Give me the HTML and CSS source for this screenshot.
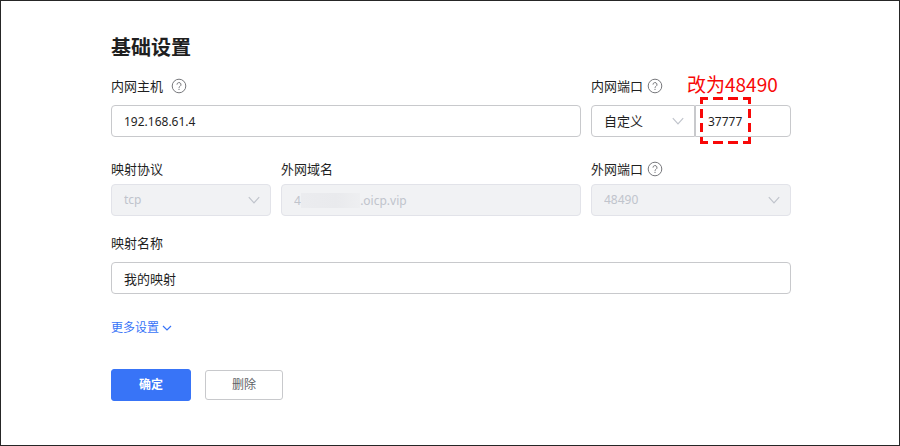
FILE: index.html
```html
<!DOCTYPE html>
<html lang="zh-CN">
	<head>
		<meta charset="utf-8">
		<meta name="viewport" content="width=device-width, initial-scale=1">
		<title>基础设置</title>
		<link rel="stylesheet" href="styles.css">
	</head>
	<body>
		<form class="settings">
			<h1>基础设置</h1>
			<div class="row">
				<div class="field host">
					<div class="label">
						<label for="host">内网主机</label>
						<svg class="help help-wide" viewBox="0 0 16 16"><circle cx="8" cy="8" r="6.8"/><path d="M6 6.6a2 2 0 1 1 3 1.7q-1 .6-1 1.5M8 10.8v1.2"/></svg>
					</div>
					<input id="host" class="latin" type="text" value="192.168.61.4">
				</div>
				<div class="field port">
					<div class="label">
						<label for="portType">内网端口</label>
						<svg class="help" viewBox="0 0 16 16"><circle cx="8" cy="8" r="6.8"/><path d="M6 6.6a2 2 0 1 1 3 1.7q-1 .6-1 1.5M8 10.8v1.2"/></svg>
					</div>
					<div class="group">
						<div class="select">
							<select id="portType"><option>自定义</option></select>
							<svg class="arrow" viewBox="0 0 12 12"><path d="M.8 3.2L6 8.8l5.2-5.6"/></svg>
						</div>
						<input id="port" class="latin" type="text" value="37777" aria-label="端口号">
					</div>
					<span class="note">改为48490</span>
					<svg class="mark" viewBox="0 0 51 47">
						<path stroke-dasharray="8 5 10 5 10 5 8 0" d="M0 1.5h51M0 45.5h51"/>
						<path stroke-dasharray="7 5 9 5 9 5 7 0" d="M1.5 0v47M49.5 0v47"/>
					</svg>
				</div>
			</div>
			<div class="row row-tight">
				<div class="field">
					<div class="label"><label for="protocol">映射协议</label></div>
					<div class="select">
						<select id="protocol" class="latin" disabled><option>tcp</option></select>
						<svg class="arrow" viewBox="0 0 12 12"><path d="M.8 3.2L6 8.8l5.2-5.6"/></svg>
					</div>
				</div>
				<div class="field">
					<div class="label"><label for="domain">外网域名</label></div>
					<div class="masked">
						<input id="domain" class="latin" type="text" value="4                   .oicp.vip" disabled>
						<span class="mask"></span>
					</div>
				</div>
				<div class="field">
					<div class="label">
						<label for="outerPort">外网端口</label>
						<svg class="help" viewBox="0 0 16 16"><circle cx="8" cy="8" r="6.8"/><path d="M6 6.6a2 2 0 1 1 3 1.7q-1 .6-1 1.5M8 10.8v1.2"/></svg>
					</div>
					<div class="select">
						<select id="outerPort" class="latin" disabled><option>48490</option></select>
						<svg class="arrow" viewBox="0 0 12 12"><path d="M.8 3.2L6 8.8l5.2-5.6"/></svg>
					</div>
				</div>
			</div>
			<div class="field">
				<div class="label"><label for="name">映射名称</label></div>
				<input id="name" type="text" value="我的映射">
			</div>
			<a class="more" href="#">更多设置<svg viewBox="0 0 12 12"><path d="M2 4l4 4 4-4"/></svg></a>
			<div class="actions">
				<button class="primary" type="submit">确定</button>
				<button type="button">删除</button>
			</div>
		</form>
	</body>
</html>
```
FILE: styles.css
```css
:root {
	--text-color: #1f1f1f;
	--border: #c8c9cc;
	--blue: #3874f7;
	--red: #f80808;
}
* {
	box-sizing: border-box;
}
body {
	margin: 0;
	min-height: 100vh;
	border: 1px solid #262626;
	background: #fff;
	color: var(--text-color);
	font: 13px/20px "Noto Sans", "Noto Sans CJK SC", sans-serif;
}
.settings {
	padding: 32px 108px 44px 110px;
}
h1 {
	margin: 0 0 13px;
	font-size: 20px;
	line-height: 30px;
}

.row {
	display: grid;
	grid-template-columns: 16fr 30fr 20fr;
	gap: 10px;
	margin-bottom: 22px;
}
.row-tight {
	margin-bottom: 17px;
}
.row-tight .label {
	margin-bottom: 5px;
}
.host {
	grid-column: span 2;
}
.field {
	min-width: 0;
}
.port {
	position: relative;
}
.label {
	display: flex;
	align-items: center;
	gap: 4px;
	margin-bottom: 9px;
}
svg {
	fill: none;
	stroke: currentColor;
}
.help {
	width: 16px;
	height: 16px;
	color: #77787c;
}
.help-wide {
	margin-left: 4px;
}

input, select {
	display: block;
	width: 100%;
	height: 32px;
	margin: 0;
	padding: 0 12px;
	border: 1px solid var(--border);
	border-radius: 4px;
	background: #fff;
	color: inherit;
	font: inherit;
	appearance: none;
}
input:disabled, select:disabled {
	border-color: #e2e3e9;
	background: #f1f2f4;
	color: #c0c4cc;
	opacity: 1;
}
.latin {
	font-size: 12px;
}
.select, .masked {
	position: relative;
}
.arrow {
	position: absolute;
	top: 10px;
	right: 11px;
	width: 12px;
	height: 12px;
	color: #c0c4cc;
	stroke-width: 1.2;
	pointer-events: none;
}
.group {
	display: grid;
	grid-template-columns: 13fr 12fr;
}
.group select {
	border-radius: 4px 0 0 4px;
}
.group input {
	border-radius: 0 4px 4px 0;
}

/* hides the account part of the domain */
.mask {
	position: absolute;
	top: 9px;
	left: 20px;
	width: 59px;
	height: 15px;
	background: linear-gradient(90deg, #ebecef, #e9eaed 60%, #eeeff1);
}

.note {
	position: absolute;
	top: -4px;
	left: 96px;
	color: var(--red);
	font-family: "Noto Sans CJK SC", sans-serif;
	font-size: 19px;
	line-height: 24px;
	white-space: nowrap;
}
.mark {
	position: absolute;
	top: 21px;
	left: 109px;
	width: 51px;
	height: 47px;
	color: var(--red);
	stroke-width: 3;
	pointer-events: none;
}

.more {
	display: inline-flex;
	align-items: center;
	gap: 2px;
	margin-top: 24px;
	color: var(--blue);
	font-size: 12px;
	text-decoration: none;
}
.more svg {
	width: 12px;
	height: 12px;
	stroke-width: 1.2;
}

.actions {
	display: flex;
	align-items: center;
	gap: 14px;
	margin-top: 31px;
}
button {
	width: 78px;
	height: 30px;
	padding: 0;
	border: 1px solid var(--border);
	border-radius: 3px;
	background: #fff;
	color: #606266;
	font: inherit;
	font-size: 12px;
}
.primary {
	width: 80px;
	height: 32px;
	border-color: var(--blue);
	background: var(--blue);
	color: #fff;
	font-weight: bold;
}
```
